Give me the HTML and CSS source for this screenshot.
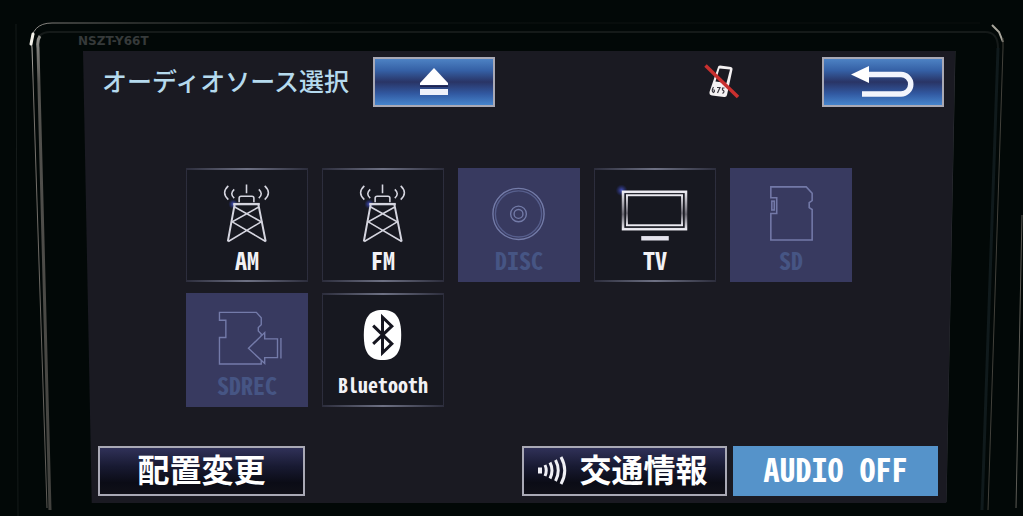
FILE: index.html
```html
<!DOCTYPE html>
<html lang="ja">
  <head>
    <meta charset="utf-8" />
    <meta name="viewport" content="width=device-width, initial-scale=1.0" />
    <title>オーディオソース選択</title>
    <link rel="stylesheet" href="styles.css">
  </head>
  <body>
    <div class="unit">
      <!-- bezel edges -->
      <svg class="bezel" viewBox="0 0 1023 516" preserveAspectRatio="none" aria-hidden="true">
        <defs>
          <linearGradient id="edge-top" x1="0" x2="1" y1="0" y2="0">
            <stop offset="0" stop-color="#8a8783" />
            <stop offset="0.12" stop-color="#4a4b49" />
            <stop offset="0.3" stop-color="#101514" />
            <stop offset="1" stop-color="#0a0e0d" />
          </linearGradient>
          <linearGradient id="edge-left" x1="0" x2="0" y1="0" y2="1">
            <stop offset="0" stop-color="#c9c6c0" />
            <stop offset="0.1" stop-color="#77736e" />
            <stop offset="1" stop-color="#5d5a55" />
          </linearGradient>
        </defs>
        <path d="M16 24 L18 516" stroke="#151b1a" fill="none" />
        <path d="M31 45 Q31 23 52 23 L980 23" stroke="url(#edge-top)" fill="none" />
        <path d="M37 45 Q37 32 50 32 L985 32 Q998 32 998 48" stroke="#151a19" stroke-width="2" fill="none" />
        <path d="M32 38 Q31 42 32 48 L47 508" stroke="url(#edge-left)" fill="none" />
        <path d="M40 36 Q37 40 38 48 L50 510" stroke="url(#edge-left)" stroke-width="3" opacity="0.7" fill="none" />
        <path d="M33 34 L31 44" stroke="#f2f0e8" stroke-width="3" stroke-linecap="round" />
        <path d="M992 25 L999 32 L1003 42" stroke="#a9a69c" stroke-width="2" fill="none" />
        <path d="M1003 38 L1003 48 L988 510" stroke="#42413b" fill="none" />
        <path d="M998 48 L982 510" stroke="#101a1c" stroke-width="3" fill="none" />
        <path d="M1022 215 L1016 508" stroke="#5c5b55" fill="none" />
        <path d="M955 51 L946 502" stroke="#34373b" fill="none" />
      </svg>

      <p class="model">NSZT-Y66T</p>

      <main class="screen">
        <header class="topbar">
          <h1 class="title">オーディオソース選択</h1>
          <button class="key key-blue" type="button" aria-label="イジェクト">
            <svg width="30" height="30" viewBox="0 0 30 30">
              <path d="M15 1 L29 16 V18 H1 V16 Z" fill="#fff" />
              <path d="M1 18.500 H29 V20 H1 Z" fill="#1d2350" />
              <rect x="1" y="22" width="28" height="6" fill="#eef1fa" />
            </svg>
          </button>
          <svg class="phone" width="36" height="36" viewBox="0 0 36 36" aria-hidden="true">
            <path d="M14 3 Q14 1.500 16 1.500 L27 3 Q29 3.500 28.500 5.500 L23 31 Q22.500 33.500 20 33 L8 31.500 Q5 31 5.500 28 Z" fill="#f4f1f2" />
            <path d="M15.500 4.500 L26 5.500 L22.500 19 L11.500 17.500 Z" fill="#1a1921" />
            <path d="M9.500 23 q-2.500 4 0 5.500 q2 -1.500 0 -3 M13 23.500 h3 l-2.500 5.500 M20.500 24 h-2 v2 q3 1 0 3.500" stroke="#3a3840" stroke-width="1.200" fill="none" />
            <path d="M1.500 1.500 L34 33" stroke="#c9302f" stroke-width="3.500" />
          </svg>
          <button class="key key-blue" type="button" aria-label="戻る">
            <svg width="66" height="34" viewBox="0 0 66 34">
              <path d="M18 9.500 H51 A9.750 9.750 0 0 1 51 29 H12" fill="none" stroke="#f3f5fc" stroke-width="5.500" />
              <path d="M1 9.500 L19 1 V18 Z" fill="#fff" />
            </svg>
          </button>
        </header>

        <section class="sources">
          <button class="tile" type="button">
            <svg class="icon" viewBox="0 0 122 84" stroke="#d5d5df" stroke-width="1.600" fill="none">
              <circle cx="47" cy="36" r="5" fill="url(#glow)" stroke="none" />
              <path d="M60.500 16 V25 M53 34 V30 Q53 28 55 28 H66 Q68 28 68 30 V34" />
              <path d="M48 21 Q43 25.500 48 30 M42 17.500 Q34.500 24.500 42 31.500 M73 21 Q78 25.500 73 30 M79 17.500 Q86.500 24.500 79 31.500" />
              <path d="M47 36 H74" stroke-width="2.400" />
              <path d="M48.500 36 L41.500 74 M72.500 36 L80 74" stroke-width="2" />
              <path d="M48.500 39 L75.500 54 L42 74 M73 39 L46 54 L80 74" />
            </svg>
            <span class="label">AM</span>
          </button>
          <button class="tile" type="button">
            <svg class="icon" viewBox="0 0 122 84" stroke="#d5d5df" stroke-width="1.600" fill="none">
              <circle cx="47" cy="36" r="5" fill="url(#glow)" stroke="none" />
              <path d="M60.500 16 V25 M53 34 V30 Q53 28 55 28 H66 Q68 28 68 30 V34" />
              <path d="M48 21 Q43 25.500 48 30 M42 17.500 Q34.500 24.500 42 31.500 M73 21 Q78 25.500 73 30 M79 17.500 Q86.500 24.500 79 31.500" />
              <path d="M47 36 H74" stroke-width="2.400" />
              <path d="M48.500 36 L41.500 74 M72.500 36 L80 74" stroke-width="2" />
              <path d="M48.500 39 L75.500 54 L42 74 M73 39 L46 54 L80 74" />
            </svg>
            <span class="label">FM</span>
          </button>
          <button class="tile" type="button" disabled>
            <svg class="icon" viewBox="0 0 122 84" stroke="#737ba8" stroke-width="1.400" fill="none">
              <circle cx="60.500" cy="46" r="26" />
              <circle cx="60.500" cy="46" r="23.500" stroke="#565e8c" />
              <circle cx="60.500" cy="46" r="8" />
              <circle cx="60.500" cy="46" r="4.500" />
            </svg>
            <span class="label">DISC</span>
          </button>
          <button class="tile" type="button">
            <svg class="icon" viewBox="0 0 122 84" fill="none">
              <defs>
                <radialGradient id="glow">
                  <stop offset="0" stop-color="#5a6cff" stop-opacity="0.7" />
                  <stop offset="1" stop-color="#3040c0" stop-opacity="0" />
                </radialGradient>
                <linearGradient id="tube" x1="0" x2="0" y1="0" y2="1">
                  <stop offset="0" stop-color="#ecebf2" />
                  <stop offset="0.6" stop-color="#66646e" />
                  <stop offset="1" stop-color="#ecebf2" />
                </linearGradient>
              </defs>
              <circle cx="27" cy="22" r="6" fill="url(#glow)" />
              <rect x="28.500" y="23.500" width="64" height="38" stroke="url(#tube)" stroke-width="2.600" />
              <rect x="32.500" y="27" width="56" height="30.500" stroke="url(#tube)" stroke-width="2" />
              <rect x="47" y="68.500" width="28" height="4.500" fill="#e4e3ec" />
            </svg>
            <span class="label">TV</span>
          </button>
          <button class="tile" type="button" disabled>
            <svg class="icon" viewBox="0 0 122 84" stroke="#7379a8" stroke-width="1.600" fill="none">
              <path d="M40.500 18.500 H76.500 L82.500 25 V32.500 L79.500 34.500 V39.500 L82.500 41.500 V72.500 H40.500 V45.500 H46.500 V29.500 H40.500 Z" />
              <rect x="41.500" y="33" width="2.500" height="9" />
            </svg>
            <span class="label">SD</span>
          </button>
          <button class="tile" type="button" disabled>
            <svg class="icon" viewBox="0 0 122 84" stroke="#747baa" stroke-width="1.400" fill="none">
              <path d="M75.500 43 V41 L72.500 38 V34.500 L75.500 31.500 V24.500 L70.500 19 H33 V27 H39.500 V44.500 H33 V71.500 H75.500 V68" />
              <path d="M62.500 55.500 L79 39.500 V46 H92 V65 H79 V71 Z M95.500 45 V66" />
            </svg>
            <span class="label">SDREC</span>
          </button>
          <button class="tile" type="button">
            <svg class="icon" viewBox="0 0 122 84" fill="none">
              <path d="M60.500 16.500 C74 16.500 79.500 24 79.500 42 S74 67.500 60.500 67.500 S41.500 60 41.500 42 S47 16.500 60.500 16.500 Z" fill="#fff" />
              <path d="M51 32.500 L70 51 L60.500 60 V24 L70 33 L51 51" stroke="#15151f" stroke-width="3" />
            </svg>
            <span class="label label-long">Bluetooth</span>
          </button>
        </section>

        <footer class="bottombar">
          <button class="key key-dark" type="button">配置変更</button>
          <button class="key key-dark key-traffic" type="button">
            <svg width="32" height="32" viewBox="0 0 32 32" fill="none" stroke="#f0f0f5" aria-hidden="true">
              <rect x="1" y="13.500" width="4" height="6" fill="#f0f0f5" stroke="none" />
              <path d="M8 11 Q10.500 16.500 8 22 M13 8.500 Q17 16.500 13 24.500 M18.500 6 Q24 16.500 18.500 27 M24 3 Q31.500 16.500 24 30" stroke-width="3" />
            </svg>
            <span>交通情報</span>
          </button>
          <button class="key key-off" type="button">AUDIO OFF</button>
        </footer>
      </main>
    </div>
  </body>
</html>
```
FILE: styles.css
```css
* {
  margin: 0;
  padding: 0;
  box-sizing: border-box;
}

body {
  font-family: 'Noto Sans CJK JP', sans-serif;
  color: #fff;
  background-color: #020807;
}

svg {
  display: block;
}

.unit {
  position: relative;
  display: flex;
  flex-direction: column;
  min-height: 100vh;
  padding: 34px 68px 13px 83px;
  overflow: hidden;
}

/* lies behind the whole unit */
.bezel {
  position: absolute;
  top: 0;
  left: 0;
  width: 100%;
  height: 100%;
}

.model {
  position: relative;
  height: 17px;
  margin-left: -5px;
  font-family: 'DejaVu Sans', sans-serif;
  font-size: 12px;
  font-weight: 700;
  line-height: 14px;
  color: #363a3a;
}

.screen {
  position: relative;
  flex: 1;
  display: flex;
  flex-direction: column;
  padding: 6px 0 7px;
}

/* the panel narrows towards the bottom */
.screen::before {
  content: '';
  position: absolute;
  top: 0;
  right: 0;
  bottom: 0;
  left: 0;
  background-color: #1a1a22;
  clip-path: polygon(0 0, 100% 0, 99% 100%, 1% 100%);
}

.topbar,
.sources,
.bottombar {
  position: relative;
}

.topbar {
  display: flex;
  align-items: center;
  padding: 0 11px 0 19px;
}

.title {
  margin-right: 24px;
  padding-bottom: 4px;
  font-size: 25px;
  font-weight: 500;
  line-height: 46px;
  color: #b5daee;
  white-space: nowrap;
}

.key {
  display: flex;
  align-items: center;
  justify-content: center;
  height: 50px;
  border: 2px solid #a9a9b5;
  font-family: inherit;
  font-size: 32px;
  font-weight: 700;
  line-height: 40px;
  color: #fff;
  white-space: nowrap;
}

.key-blue {
  width: 122px;
  background: linear-gradient(#4d82c4, #3560a5 25%, #293465 50%, #3158a0 75%, #4685cd);
}

.phone {
  margin-left: auto;
  margin-right: 82px;
}

.sources {
  display: grid;
  grid-template-columns: repeat(5, minmax(0, 1fr));
  gap: 11px 14px;
  margin: 61px 103px 0;
}

.tile {
  display: flex;
  flex-direction: column;
  align-items: center;
  height: 114px;
  border: 1px solid #2c2d3c;
  border-top: 2px solid;
  border-bottom: 2px solid;
  border-image: linear-gradient(90deg, #2c2d3c, #6e7184 50%, #2c2d3c) 2 1;
  background-color: #171820;
  color: #f2f2f6;
}

.tile:disabled {
  border: 0;
  padding: 2px 1px;
  background-color: #383a60;
  color: #465584;
}

.icon {
  width: 100%;
  height: 84px;
  margin-top: -2px;
  margin-bottom: -4px;
  flex: none;
}

.label {
  font-family: 'Noto Sans Mono CJK JP', 'Noto Sans CJK JP', sans-serif;
  font-size: 24px;
  font-weight: 700;
  line-height: 24px;
}

.label-long {
  font-size: 20px;
}

.bottombar {
  display: grid;
  grid-template-columns: 207px 1fr 205px 205px;
  column-gap: 6px;
  margin-top: auto;
  padding: 0 17px 0 15px;
}

.bottombar .key {
  padding-bottom: 6px;
}

.key-dark {
  background: linear-gradient(#303158, #181a32 40%, #0b0c16 75%, #101018);
}

.key-traffic {
  grid-column: 3;
  gap: 10px;
}

.key-traffic svg {
  margin: 4px 0 0 -4px;
}

.bottombar .key-off {
  border: 0;
  background-color: #5593ca;
  font-family: 'Noto Sans Mono CJK JP', 'Noto Sans CJK JP', sans-serif;
}
```
